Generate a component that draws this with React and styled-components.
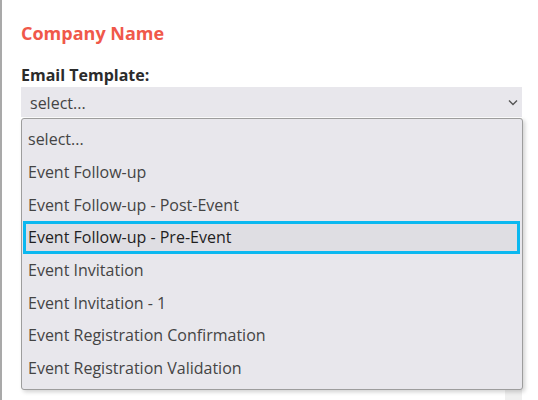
import React from "react";
import styled, { createGlobalStyle } from "styled-components";

const GlobalStyle = createGlobalStyle`
  html, body {
    margin: 0;
    padding: 0;
    background: #ffffff;
    font-family: "Open Sans", "Liberation Sans", sans-serif;
  }
`;

const Page = styled.div`
  width: 538px;
  height: 400px;
  overflow: hidden;
  box-sizing: border-box;
  border-left: 2px solid #a9a9a9;
  padding: 20px 15px 0 19px;
`;

const Title = styled.h2`
  margin: 0 0 19px;
  font-size: 18px;
  font-weight: 700;
  line-height: 26px;
  color: #f0584a;
`;

const Label = styled.label`
  display: block;
  font-size: 16px;
  font-weight: 700;
  line-height: 21px;
  color: #2b2b2b;
  margin-bottom: 1px;
`;

const Field = styled.div`
  position: relative;
  width: 501px;
`;

const Select = styled.div`
  display: flex;
  align-items: center;
  justify-content: space-between;
  height: 30px;
  padding: 1px 4px 0 9px;
  box-sizing: border-box;
  background: #e8e7ec;
  font-size: 16px;
  color: #444;
`;

const Below = styled.div`
  height: 300px;
  margin-top: 1px;
  background: #fff;
  border-right: 17px solid #f0f0f0;
`;

const Menu = styled.ul`
  position: absolute;
  top: 31px;
  left: 0;
  width: 502px;
  box-sizing: border-box;
  margin: 0;
  padding: 4px 1px 4px;
  list-style: none;
  background: #e8e7ec;
  border: 1px solid #9d9d9d;
  border-radius: 3px;
  box-shadow: 2px 2px 4px rgba(0, 0, 0, 0.18);
`;

const Option = styled.li`
  box-sizing: border-box;
  height: 32.7px;
  display: flex;
  align-items: center;
  padding-left: ${(p) => (p.$active ? "2px" : "5px")};
  font-size: 16px;
  color: ${(p) => (p.$active ? "#1f1f1f" : "#444")};
  background: ${(p) => (p.$active ? "#dfdee3" : "transparent")};
  border: ${(p) => (p.$active ? "3px solid #0bb8f0" : "none")};
  margin-right: ${(p) => (p.$active ? "1px" : "0")};
`;

const options = [
  "select...",
  "Event Follow-up",
  "Event Follow-up - Post-Event",
  "Event Follow-up - Pre-Event",
  "Event Invitation",
  "Event Invitation - 1",
  "Event Registration Confirmation",
  "Event Registration Validation",
];

const Chevron = () => (
  <svg width="10" height="7" viewBox="0 0 10 7">
    <path d="M1 1.5 L5 5.5 L9 1.5" fill="none" stroke="#555" strokeWidth="1.4" />
  </svg>
);

export default function App() {
  return (
    <>
      <GlobalStyle />
      <Page>
        <Title>Company Name</Title>
        <Label>Email Template:</Label>
        <Field>
          <Select>
            <span>select...</span>
            <Chevron />
          </Select>
          <Below />
          <Menu>
            {options.map((o, i) => (
              <Option key={o} $active={i === 3}>
                {o}
              </Option>
            ))}
          </Menu>
        </Field>
      </Page>
    </>
  );
}
